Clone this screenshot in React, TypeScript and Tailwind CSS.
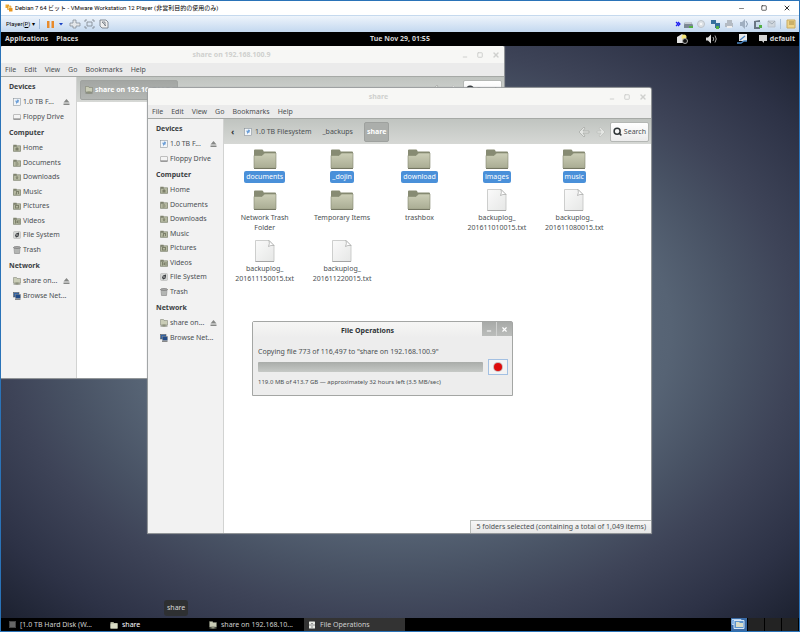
import { type ReactNode } from "react";
import { Search, X, Square, Minus } from "lucide-react";

type Kind = "folder" | "doc";

interface FileItem {
  name: string[];
  kind: Kind;
  selected?: boolean;
}

interface Place {
  label: string;
  icon: ReactNode;
  eject?: boolean;
}

const SmallFolder = ({ glyph }: { glyph: string }) => (
  <svg viewBox="0 0 16 16" className="size-2 shrink-0">
    <path d="M.5 1.500h6.500l1 2h7.500v11.500H.5z" fill="#7f836e" />
    <path d="M1 5h6l2-1.500h6V14.500H1z" fill="#b5b8a1" stroke="#75796a" strokeWidth=".8" />
    <path d={glyph} fill="#7c806a" />
  </svg>
);

const PlainFolder = () => (
  <svg viewBox="0 0 16 16" className="size-2 shrink-0">
    <path d="M1 2h6l1 2h7v11H1z" fill="#a9ac95" />
    <path d="M1 5h14v10H1z" fill="#d9dcc6" />
  </svg>
);

const NetFolder = () => (
  <svg viewBox="0 0 16 16" className="size-2 shrink-0">
    <path d="M1 1h6l1 2h7v9H1z" fill="#c9ccb6" stroke="#74786a" />
    <path d="M1 14h14M8 12v2" stroke="#74786a" strokeWidth="2" />
    <path d="M5 11h6v4H5z" fill="#8d917c" />
  </svg>
);

const DiskIcon = () => (
  <svg viewBox="0 0 16 16" className="size-2 shrink-0">
    <rect x="1" y="1" width="14" height="14" fill="#f2f5f8" stroke="#7c868f" />
    <path d="M4 5l3 1 1-3 4 1-1 5-3 1-1 3-1-4z" fill="#6ea0d8" />
  </svg>
);

const FloppyIcon = () => (
  <svg viewBox="0 0 16 16" className="size-2 shrink-0">
    <rect x="1" y="3" width="14" height="10" rx="1" fill="#f4f4f4" stroke="#8a8a8a" />
    <path d="M1 12h14" stroke="#777" strokeWidth="2" />
  </svg>
);

const FileSystemIcon = () => (
  <svg viewBox="0 0 16 16" className="size-2 shrink-0">
    <rect x="1" y="1" width="14" height="14" rx="2" fill="#d5d7d5" stroke="#aaa" />
    <path d="M12 3L6 5 4 9l2 4 5-2 1-5z" fill="#3c3f42" />
    <circle cx="8" cy="8" r="1.500" fill="#ddd" />
  </svg>
);

const TrashIcon = () => (
  <svg viewBox="0 0 16 16" className="size-2 shrink-0">
    <path d="M2 3l1 12h10l1-12z" fill="#d4d6d4" stroke="#666" />
    <ellipse cx="8" cy="3" rx="7" ry="2" fill="#aaa" stroke="#555" />
    <path d="M3 8h10M3 12h10M6 5v10M10 5v10" stroke="#888" />
  </svg>
);

const BrowseIcon = () => (
  <svg viewBox="0 0 16 16" className="size-2 shrink-0">
    <rect x="1" y="1" width="11" height="9" fill="#3465a4" stroke="#555" />
    <rect x="5" y="5" width="10" height="8" fill="#204a87" stroke="#888" />
    <path d="M4 15h11" stroke="#888" strokeWidth="2" />
  </svg>
);

const EjectIcon = () => (
  <svg viewBox="0 0 14 14" className="size-[7px] shrink-0">
    <path d="M7 0l6 7H1zM1 9h12v3H1z" fill="#868886" />
  </svg>
);

const FolderIcon = () => (
  <svg viewBox="0 0 24 22" className="h-[22px] w-6">
    <defs>
      <linearGradient id="front" x1="0" y1="0" x2="0" y2="1">
        <stop offset="0" stopColor="#ccceb7" />
        <stop offset="1" stopColor="#a9ac93" />
      </linearGradient>
    </defs>
    <path d="M1 19V2.500q0-1 1-1h7q1 0 1.300 1l.4 1H22q1 0 1 1V19z" fill="#878b73" />
    <path d="M1 7.500H9l2.500-2.500H23V19.500q0 .8-.8.8H1.800q-.8 0-.8-.8z" fill="url(#front)" stroke="#85886f" strokeWidth=".6" />
    <path d="M1 20.500h22" stroke="#62654f" strokeWidth=".8" />
  </svg>
);

const DocIcon = () => (
  <svg viewBox="0 0 24 22" className="h-[22px] w-6">
    <defs>
      <linearGradient id="paper" x1="0" y1="0" x2="1" y2="1">
        <stop offset="0" stopColor="#fafafa" />
        <stop offset="1" stopColor="#e6e7e6" />
      </linearGradient>
    </defs>
    <path d="M2.500.5h13.500l5 5v16H2.500z" fill="url(#paper)" stroke="#c2c3c2" strokeWidth=".8" />
    <path d="M16 .5q1 3-.5 6 2-1.500 5.500-1z" fill="#fff" stroke="#a4a5a4" strokeWidth=".7" />
    <path d="M2.500 21.500h18.500" stroke="#9a9b9a" strokeWidth=".8" />
  </svg>
);

const sections: { title: string; size: string; places: Place[] }[] = [
  {
    title: "Devices",
    size: "h-[29px]",
    places: [
      { label: "1.0 TB F...", icon: <DiskIcon />, eject: true },
      { label: "Floppy Drive", icon: <FloppyIcon /> },
    ],
  },
  {
    title: "Computer",
    size: "h-[116px]",
    places: [
      { label: "Home", icon: <SmallFolder glyph="M4 10l4-4 4 4h-1v3H5v-3z" /> },
      { label: "Documents", icon: <SmallFolder glyph="M5 6h5v1H5zM5 8h6v1H5zM5 10h6v1H5zM5 12h4v1H5z" /> },
      { label: "Downloads", icon: <SmallFolder glyph="M7 6h2v3h2l-3 4-3-4h2z" /> },
      { label: "Music", icon: <SmallFolder glyph="M6 6h6v6h-2V8H8v5H5v-2h1z" /> },
      { label: "Pictures", icon: <SmallFolder glyph="M4 6h8v7H4zm2 2v3h4V8z" /> },
      { label: "Videos", icon: <SmallFolder glyph="M4 6h2v7H4zM7 7h3v5H7zM11 6h2v7h-2z" /> },
      { label: "File System", icon: <FileSystemIcon /> },
      { label: "Trash", icon: <TrashIcon /> },
    ],
  },
  {
    title: "Network",
    size: "h-[29px]",
    places: [
      { label: "share on...", icon: <NetFolder />, eject: true },
      { label: "Browse Net...", icon: <BrowseIcon /> },
    ],
  },
];

const files: FileItem[] = [
  { name: ["documents"], kind: "folder", selected: true },
  { name: ["_dojin"], kind: "folder", selected: true },
  { name: ["download"], kind: "folder", selected: true },
  { name: ["images"], kind: "folder", selected: true },
  { name: ["music"], kind: "folder", selected: true },
  { name: ["Network Trash", "Folder"], kind: "folder" },
  { name: ["Temporary Items"], kind: "folder" },
  { name: ["trashbox"], kind: "folder" },
  { name: ["backuplog_", "201611010015.txt"], kind: "doc" },
  { name: ["backuplog_", "201611080015.txt"], kind: "doc" },
  { name: ["backuplog_", "201611150015.txt"], kind: "doc" },
  { name: ["backuplog_", "201611220015.txt"], kind: "doc" },
];

const Sidebar = () => (
  <nav className="w-[76px] shrink-0 border-r border-[#d2d3d2] bg-[#f2f2f2] pt-px">
    {sections.map((s) => (
      <section key={s.title}>
        <h2 className="flex h-[17px] items-center pl-2 font-bold text-[#3b4042]">{s.title}</h2>
        <ul className={`grid auto-rows-fr ${s.size}`}>
          {s.places.map((p) => (
            <li key={p.label} className="flex items-center">
              <a href="#" className="flex flex-1 items-center gap-[2px] pl-3 whitespace-nowrap">
                {p.icon}
                {p.label}
              </a>
              {p.eject && (
                <button aria-label="Eject" className="mr-[6px]">
                  <EjectIcon />
                </button>
              )}
            </li>
          ))}
        </ul>
      </section>
    ))}
  </nav>
);

const HistoryArrows = () => (
  <svg viewBox="0 0 28 12" className="h-3 w-7" fill="#e4e6e3" stroke="#a9aca8" strokeWidth=".8">
    <path d="M6 1L1 6l5 5 1-1-2-3h6V5H5l2-3z" />
    <path d="M22 1l5 5-5 5-1-1 2-3h-4V5h4l-2-3z" stroke="#bfc2be" />
  </svg>
);

const FileWindow = ({
  title,
  className,
  path,
  children,
}: {
  title: string;
  className: string;
  path: ReactNode;
  children?: ReactNode;
}) => (
  <section className={`absolute flex flex-col overflow-hidden rounded-t-[2px] bg-white shadow-[0_0_1px_1px_#9a9d9e] ${className}`}>
    <header className="flex h-[17px] shrink-0 items-center bg-[#f7f7f5] pr-1 text-[#cfd0ce]">
      <h1 className="flex-1 text-center font-bold">{title}</h1>
      <div className="flex items-center gap-[9px]">
        <button aria-label="Minimize" className="pt-1"><Minus size={6} strokeWidth={4} /></button>
        <button aria-label="Maximize"><Square size={6} strokeWidth={4} /></button>
        <button aria-label="Close"><X size={8} strokeWidth={4} /></button>
      </div>
    </header>
    <div className="flex h-[14px] shrink-0 items-center gap-2 border-b border-[#a6a9a6] bg-[#ebebeb] pl-1">
      {["File", "Edit", "View", "Go", "Bookmarks", "Help"].map((m) => (
        <button key={m}>{m}</button>
      ))}
    </div>
    <div className="flex min-h-0 flex-1">
      <Sidebar />
      <div className="flex min-w-0 flex-1 flex-col">
        <div className="flex h-[25px] shrink-0 items-center bg-linear-to-b from-[#c0c4c0] to-[#d6d8d5] pr-[2px]">
          {path}
          <button className="ml-auto" aria-label="History"><HistoryArrows /></button>
          <button className="ml-1 flex h-5 items-center gap-[2px] rounded-[2px] border border-[#b4b7b4] bg-linear-to-b from-white to-[#ececec] px-[2px]">
            <Search size={9} strokeWidth={4} className="text-[#2e3436]" />
            Search
          </button>
        </div>
        {children}
      </div>
    </div>
  </section>
);

const FileOperations = () => (
  <section className="absolute top-[275px] left-[251px] w-[261px] rounded-t-[2px] border border-[#a4a6a4] bg-[#ededed] pb-2">
    <header className="flex h-4 items-start bg-linear-to-b from-[#f6f6f5] to-[#ededed]">
      <h1 className="flex-1 pt-1 text-center font-bold text-[#2e3436]">File Operations</h1>
      <div className="flex h-[14px] divide-x divide-[#d0d1d0] bg-linear-to-b from-[#a8aaa8] to-[#bbbdbb] text-white">
        <button aria-label="Minimize" className="flex w-[15px] items-end justify-center pb-[2px]"><Minus size={6} strokeWidth={4} /></button>
        <button aria-label="Close" className="flex w-[15px] items-center justify-center"><X size={7} strokeWidth={4} /></button>
      </div>
    </header>
    <p className="mt-[9px] pl-[5px]">Copying file 773 of 116,497 to "share on 192.168.100.9"</p>
    <div className="mt-[2px] flex items-center gap-[5px] pr-1 pl-[5px]">
      <div role="progressbar" aria-label="Copy progress" aria-valuenow={0} className="h-[10px] flex-1 rounded-[1px] bg-linear-to-b from-[#a9aca9] to-[#c6c9c6]" />
      <button aria-label="Cancel" className="flex h-4 w-5 items-center justify-center border border-[#a3c0e2] bg-[#f3f3f3]">
        <span className="size-2 rounded-full bg-[#dd0a0a] ring-1 ring-[#c9b9b9]" />
      </button>
    </div>
    <p className="mt-[2px] pl-[5px] text-[6px]">119.0 MB of 413.7 GB — approximately 32 hours left (3.5 MB/sec)</p>
  </section>
);

const TrayIcons = () => (
  <svg viewBox="0 0 124 14" className="h-[14px] w-[124px]">
    <path d="M1 5l2 2-2 2M3 5l2 2-2 2" fill="none" stroke="#1c1cf0" strokeWidth="1.200" />
    <path d="M10 5h6l2 3v3H9V8z" fill="#7b8794" /><path d="M10 5h6l1 2h-7z" fill="#c5ccd3" /><path d="M14 9h4v2h-4z" fill="#52b043" />
    <circle cx="26" cy="7" r="3.500" fill="#dde2e6" stroke="#bcc3ca" /><circle cx="26" cy="7" r="1" fill="#fff" />
    <path d="M36 3h5v4h-5zM40 6h5v5h-5z" fill="#356f9d" /><path d="M41 9h3v3h-3z" fill="#52b043" />
    <path d="M52 3h5v3h-5zM50 6h8v4h-8z" fill="#b4bbc3" /><path d="M52 9h5v2h-5z" fill="#eee" />
    <path d="M65 5h2l3-3v10l-3-3h-2z" fill="#a0afc0" /><path d="M71 4q3 3 0 6" fill="none" stroke="#8b9caf" />
    <path d="M79 4l6-1v9h-6z" fill="#697683" /><path d="M81 5h5v5h-5z" fill="#c8dbe9" /><path d="M84 8h3v3h-3z" fill="#52b043" />
    <path d="M93 4h7v6h-7z" fill="#d0d7de" stroke="#b6bec6" strokeWidth=".8" /><path d="M93 4l4 3 3-3" fill="none" stroke="#a5afb9" />
    <path d="M105.500 2v10" stroke="#aac2dd" />
    <path d="M112 3h8v8h-8z" fill="#efd58a" stroke="#c9ab62" /><path d="M114 5h5M114 7h5" stroke="#a58a48" />
  </svg>
);

const VmwareBar = () => (
  <>
    <header className="flex h-[14px] shrink-0 items-center bg-white pl-1 font-[Roboto,'Noto_Sans_CJK_JP',sans-serif] text-[6px] text-black">
      <svg viewBox="0 0 16 16" className="mr-[2px] size-2">
        <path d="M1 1h7v7H1z" fill="#f0a830" /><path d="M5 4h7v7H5z" fill="#fbd27a" stroke="#c77f14" /><path d="M8 8h7v7H8z" fill="#e8941c" />
      </svg>
      <span className="flex-1">Debian 7 64 ビット - VMware Workstation 12 Player (非営利目的の使用のみ)</span>
      <div className="flex items-center gap-4 pr-2 text-[#333]">
        <button aria-label="Minimize"><Minus size={7} /></button>
        <button aria-label="Maximize"><Square size={6} strokeWidth={3} /></button>
        <button aria-label="Close"><X size={8} strokeWidth={3} /></button>
      </div>
    </header>
    <div className="flex h-[17px] shrink-0 items-center border-t border-[#c5d9ee] bg-linear-to-b from-[#eef4fb] to-[#c3d8ef] pl-[5px] text-[6px] text-black">
      <button className="font-[Roboto,sans-serif]">Player(<u>P</u>) ▾</button>
      <svg viewBox="0 0 74 14" className="ml-[3px] h-[14px] w-[74px]" fill="none">
        <path d="M1.500 2v10" stroke="#9fbbdc" />
        <path d="M9 4h2.500v7H9zM13.500 4H16v7h-2.500z" fill="#e88b2c" />
        <path d="M21 6h4l-2 2.500z" fill="#1740c4" />
        <path d="M35 3h3v3h4v3h-4v2h-3V9h-3V6h3z" fill="#e4e7ea" stroke="#7d858e" strokeWidth=".7" />
        <path d="M47 5V3h2M54 3h2v2M56 9v2h-2M49 11h-2V9M49 5h5v4h-5z" stroke="#7d858e" strokeWidth=".8" />
        <path d="M62 3h6l2 2v6h-6l-2-2z" fill="#eee" stroke="#6d757e" strokeWidth=".8" /><path d="M64 5l4 4M64 5h3v4" stroke="#6d757e" strokeWidth=".8" />
      </svg>
      <div className="ml-auto"><TrayIcons /></div>
    </div>
  </>
);

const TopPanel = () => (
  <div className="grid h-[14px] shrink-0 grid-cols-3 items-center bg-black px-1 font-bold text-[#d5d5d5]">
    <div className="flex gap-2">
      <button>Applications</button>
      <button>Places</button>
    </div>
    <span className="text-center">Tue Nov 29, 01:55</span>
    <div className="flex items-center justify-end">
      <svg viewBox="0 0 92 14" className="mr-[2px] h-[14px] w-[92px]" fill="none">
        <path d="M1 5l5-3 4 3v6H1z" fill="#e5e5e5" /><circle cx="8" cy="5" r="2.500" fill="#f6e67a" /><circle cx="9" cy="9" r="2.500" fill="#111" stroke="#aaa" />
        <path d="M30 5.500h2l3-3v9l-3-3h-2z" fill="#ddd" /><path d="M37 5q1.500 2 0 4M39 3.500q2.500 3.500 0 7" stroke="#aaa" />
        <path d="M63 2h8v7h-8z" fill="#e8e8e8" /><path d="M69 4l-5 4M61 11h4l3-2h3" stroke="#4b86c2" strokeWidth="1.300" />
        <path d="M83 3h8v6h-3v2l-2-2h-3z" fill="#d4d4d4" />
      </svg>
      default
    </div>
  </div>
);

const Taskbar = () => (
  <footer className="flex h-[13px] shrink-0 items-stretch bg-black text-[#cfcfcf]">
    <div className="grid w-[404px] grid-cols-4">
      <button className="flex items-center gap-1 pl-2 whitespace-nowrap">
        <span className="size-[7px] border border-[#444] bg-[#666]" /> [1.0 TB Hard Disk (W...
      </button>
      <button className="flex items-center gap-1 pl-2 whitespace-nowrap text-white"><PlainFolder /> share</button>
      <button className="flex items-center gap-1 pl-[6px] whitespace-nowrap"><NetFolder /> share on 192.168.10...</button>
      <button className="flex items-center gap-1 bg-[#333] pl-1 whitespace-nowrap">
        <svg viewBox="0 0 16 16" className="size-2">
          <rect x="2" y="1" width="12" height="14" rx="1" fill="#e9ebe5" /><path d="M2 8h12M6 5h4M6 12h4" stroke="#777" strokeWidth="1.500" />
        </svg>
        File Operations
      </button>
    </div>
    <div className="ml-auto grid grid-cols-4 gap-px pr-px">
      <button aria-label="Workspace 1" className="flex w-4 items-center justify-center bg-[#3a6ba5]">
        <svg viewBox="0 0 16 13" className="h-[13px] w-4">
          <path d="M1 1.500h9v5H1z" fill="#4a90d9" stroke="#b5d2f0" />
          <path d="M3 2.500h10v8H3z" fill="#5b93cc" stroke="#d5e6f7" />
          <path d="M5 4h3l1 1h3v4H5z" fill="#d9dcc6" />
        </svg>
      </button>
      {[2, 3, 4].map((n) => (
        <button key={n} aria-label={`Workspace ${n}`} className="w-4 bg-[#232323]" />
      ))}
    </div>
  </footer>
);

export default function App() {
  return (
    <div className="flex h-screen min-h-[632px] flex-col overflow-hidden border border-[#2a73b8] font-['Noto_Sans','Open_Sans',sans-serif] text-[7px] leading-[10px] text-[#4b5052]">
      <VmwareBar />
      <TopPanel />
      <main className="relative flex-1 overflow-hidden bg-[radial-gradient(ellipse_at_50%_50%,#5d6b7c_35%,#566374_48%,#485264_60%,#3e4458_70%,#2d3246_86%,#1c2130_100%)]">
        <FileWindow
          title="share on 192.168.100.9"
          className="top-0 left-0 h-[332px] w-[503px]"
          path={
            <button className="ml-[3px] flex h-5 items-center gap-[2px] rounded-[2px] border border-[#a0a3a0] bg-linear-to-b from-[#a3a6a3] to-[#b3b6b3] px-1 font-bold text-white">
              <NetFolder /> share on 192.168.100.9
            </button>
          }
        />
        <FileWindow
          title="share"
          className="top-[42px] left-[147px] h-[445px] w-[503px]"
          path={
            <div className="flex items-center pl-[7px]">
              <button aria-label="Back" className="w-[13px] text-left text-[9px] font-bold text-[#2e3436]">‹</button>
              <button className="flex items-center gap-[3px]"><DiskIcon /> 1.0 TB Filesystem</button>
              <button className="mx-[7px] px-1">_backups</button>
              <button className="h-5 rounded-[2px] border border-[#9ea19e] bg-[#abaeab] px-[2px] font-bold text-white">share</button>
            </div>
          }
        >
          <ul className="grid w-[389px] grid-cols-5 gap-y-[7px] pt-1 pl-[2px]">
            {files.map((f) => (
              <li key={f.name.join("")} className="flex flex-col items-center text-center">
                {f.kind === "folder" ? <FolderIcon /> : <DocIcon />}
                <div className="mt-[2px]">
                  {f.name.map((line) => (
                    <p key={line} className={f.selected ? "-my-px rounded-[2px] bg-[#4a90d9] px-[2px] py-px text-white" : "whitespace-nowrap"}>
                      {line}
                    </p>
                  ))}
                </div>
              </li>
            ))}
          </ul>
          <p className="mt-auto ml-auto border-t border-l border-[#b9bcb9] bg-linear-to-b from-[#f7f7f7] to-[#e6e6e6] px-[5px] py-px whitespace-nowrap">
            5 folders selected (containing a total of 1,049 items)
          </p>
        </FileWindow>
        <FileOperations />
        <p role="tooltip" className="absolute bottom-[2px] left-[163px] rounded-[3px] bg-[#2e3032] px-[3px] py-[3px] text-[#d8d8d8]">
          share
        </p>
      </main>
      <Taskbar />
    </div>
  );
}
